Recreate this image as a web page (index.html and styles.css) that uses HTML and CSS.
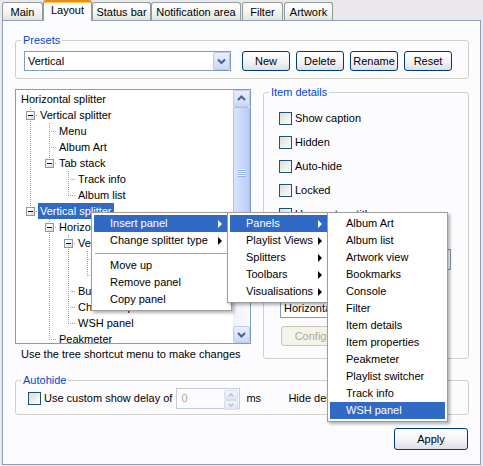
FILE: index.html
```html
<!DOCTYPE html>
<html>
<head>
<meta charset="utf-8">
<title>Layout</title>
<link rel="stylesheet" href="styles.css">
</head>
<body>
<div class="dlg">
  <div class="tabs">
    <div class="tab t-main">Main</div>
    <div class="tab sel t-layout">Layout</div>
    <div class="tab t-status">Status bar</div>
    <div class="tab t-notif">Notification area</div>
    <div class="tab t-filter">Filter</div>
    <div class="tab t-art">Artwork</div>
  </div>
  <div class="page">
    <div class="group presets">
      <span class="legend">Presets</span>
      <div class="combo preset-combo">
        <span class="combo-text">Vertical</span>
        <span class="dd"><svg width="15" height="16" viewBox="0 0 15 16"><polyline points="4,6.5 7.5,10 11,6.5" fill="none" stroke="#4D6185" stroke-width="2"/></svg></span>
      </div>
      <div class="btns">
        <div class="btn pbtn">New</div>
        <div class="btn pbtn">Delete</div>
        <div class="btn pbtn">Rename</div>
        <div class="btn pbtn">Reset</div>
      </div>
    </div>

    <div class="middle">
      <div class="treecol">
        <div class="tree">
          <div class="rows">
            <div class="row"><span class="lbl">Horizontal splitter</span></div>
            <div class="row"><span class="c tee"><i class="box"></i></span><span class="lbl">Vertical splitter</span></div>
            <div class="row"><span class="c v"></span><span class="c tee"></span><span class="lbl">Menu</span></div>
            <div class="row"><span class="c v"></span><span class="c tee"></span><span class="lbl">Album Art</span></div>
            <div class="row"><span class="c v"></span><span class="c ell"><i class="box"></i></span><span class="lbl">Tab stack</span></div>
            <div class="row"><span class="c v"></span><span class="c"></span><span class="c tee"></span><span class="lbl">Track info</span></div>
            <div class="row"><span class="c v"></span><span class="c"></span><span class="c ell"></span><span class="lbl">Album list</span></div>
            <div class="row"><span class="c ell"><i class="box"></i></span><span class="lbl sel">Vertical splitter</span></div>
            <div class="row"><span class="c"></span><span class="c tee"><i class="box"></i></span><span class="lbl">Horizontal splitter</span></div>
            <div class="row"><span class="c"></span><span class="c v"></span><span class="c tee"><i class="box"></i></span><span class="lbl">Vertical splitter</span></div>
            <div class="row"><span class="c"></span><span class="c v"></span><span class="c v"></span><span class="c tee"></span><span class="lbl">Playlist switcher</span></div>
            <div class="row"><span class="c"></span><span class="c v"></span><span class="c v"></span><span class="c ell"></span><span class="lbl">Filter</span></div>
            <div class="row"><span class="c"></span><span class="c v"></span><span class="c tee"></span><span class="lbl">Buttons</span></div>
            <div class="row"><span class="c"></span><span class="c v"></span><span class="c tee"></span><span class="lbl">Channel spectrum</span></div>
            <div class="row"><span class="c"></span><span class="c v"></span><span class="c ell"></span><span class="lbl">WSH panel</span></div>
            <div class="row"><span class="c"></span><span class="c ell"></span><span class="lbl">Peakmeter</span></div>
          </div>
          <div class="vscroll">
            <div class="sbtn"><svg width="15" height="15" viewBox="0 0 15 15"><polyline points="4,9 7.5,5.5 11,9" fill="none" stroke="#4D6185" stroke-width="2"/></svg></div>
            <div class="thumb"><span class="grip"></span></div>
            <div class="track"></div>
            <div class="sbtn"><svg width="15" height="15" viewBox="0 0 15 15"><polyline points="4,6 7.5,9.5 11,6" fill="none" stroke="#4D6185" stroke-width="2"/></svg></div>
          </div>
        </div>
        <div class="hint">Use the tree shortcut menu to make changes</div>
      </div>

      <div class="group details">
        <span class="legend">Item details</span>
        <div class="chkrow"><span class="chk"></span>Show caption</div>
        <div class="chkrow"><span class="chk"></span>Hidden</div>
        <div class="chkrow"><span class="chk"></span>Auto-hide</div>
        <div class="chkrow"><span class="chk"></span>Locked</div>
        <div class="chkrow"><span class="chk"></span>Use custom title</div>
        <div class="edit title-edit"></div>
        <div class="combo orient-combo"><span class="combo-text">Horizontal</span></div>
        <div class="btn dis cfg">Configure</div>
      </div>
    </div>

    <div class="group autohide">
      <span class="legend">Autohide</span>
      <span class="chk"></span>
      <span class="ah-label">Use custom show delay of</span>
      <div class="spin">
        <span class="spin-val">0</span>
        <span class="spin-btns">
          <span class="sp"><svg width="13" height="8" viewBox="0 0 13 8"><polyline points="4,5.5 6.5,3 9,5.5" fill="none" stroke="#B4BCC8" stroke-width="1.5"/></svg></span>
          <span class="sp"><svg width="13" height="8" viewBox="0 0 13 8"><polyline points="4,2.5 6.5,5 9,2.5" fill="none" stroke="#B4BCC8" stroke-width="1.5"/></svg></span>
        </span>
      </div>
      <span class="ms">ms</span>
      <span class="hide-label">Hide delay of</span>
      <div class="spin small"><span class="spin-val">0</span></div>
    </div>

    <div class="actions"><div class="btn apply">Apply</div></div>
  </div>
</div>

<div class="menu m1">
  <div class="mi hl sub">Insert panel</div>
  <div class="mi sub">Change splitter type</div>
  <div class="sep"></div>
  <div class="mi">Move up</div>
  <div class="mi">Remove panel</div>
  <div class="mi">Copy panel</div>
</div>
<div class="menu m2">
  <div class="mi hl sub">Panels</div>
  <div class="mi sub">Playlist Views</div>
  <div class="mi sub">Splitters</div>
  <div class="mi sub">Toolbars</div>
  <div class="mi sub">Visualisations</div>
</div>
<div class="menu m3">
  <div class="mi">Album Art</div>
  <div class="mi">Album list</div>
  <div class="mi">Artwork view</div>
  <div class="mi">Bookmarks</div>
  <div class="mi">Console</div>
  <div class="mi">Filter</div>
  <div class="mi">Item details</div>
  <div class="mi">Item properties</div>
  <div class="mi">Peakmeter</div>
  <div class="mi">Playlist switcher</div>
  <div class="mi">Track info</div>
  <div class="mi hl">WSH panel</div>
</div>
</body>
</html>
```

FILE: styles.css
```css
* { box-sizing: border-box; }
html, body { margin: 0; }
body {
  width: 483px;
  height: 466px;
  overflow: hidden;
  position: relative;
  background: #EBE8EB;
  font-family: "Liberation Sans", Arial, sans-serif;
  font-size: 11px;
  color: #000;
}

/* tabs */
.dlg { padding-left: 2px; }
.tabs {
  display: flex;
  align-items: flex-end;
  height: 20px;
  position: relative;
  z-index: 1;
}
.tab {
  height: 18px;
  padding-top: 1px;
  line-height: 17px;
  text-align: center;
  white-space: nowrap;
  border: 1px solid #919B9C;
  border-bottom: 0;
  border-radius: 3px 3px 0 0;
  background: linear-gradient(#FFFFFF, #F4F4F2 55%, #E4E3E0);
}
.tab.sel {
  height: 21px;
  margin-bottom: -1px;
  padding-top: 0;
  line-height: 17px;
  border-top: 2px solid #E68B2C;
  box-shadow: inset 0 1px 0 #FFC73C;
  background: #FCFCFE;
}
.t-main { width: 41px; }
.t-layout { width: 49px; }
.t-status { width: 59px; }
.t-notif { width: 90px; }
.t-filter { width: 41px; margin-left: 1px; }
.t-art { width: 49px; margin-left: 1px; }

/* page */
.page {
  width: 479px;
  height: 445px;
  border: 1px solid #8D9FBC;
  background: #FCFCFE;
  padding: 19px 11px 0 12px;
  overflow: hidden;
}

.group {
  position: relative;
  border: 1px solid #D0D0C8;
  border-radius: 3px;
}
.legend {
  position: absolute;
  top: -7px;
  left: 5px;
  padding: 0 2px;
  line-height: 13px;
  background: #FCFCFE;
  color: #0046D5;
  white-space: nowrap;
}

/* presets */
.presets {
  display: flex;
  align-items: flex-start;
  height: 39px;
  padding: 10px 0 0 8px;
}
.combo {
  display: flex;
  align-items: stretch;
  height: 20px;
  border: 1px solid #7F9DB9;
  background: #FFFFFF;
}
.combo-text {
  flex: 1;
  padding-left: 3px;
  line-height: 18px;
  white-space: nowrap;
  overflow: hidden;
}
.preset-combo { width: 207px; }
.dd {
  width: 17px;
  border: 1px solid #B9C8EC;
  border-radius: 2px;
  background: linear-gradient(#E9EFFC, #CBD8F6);
  display: flex;
  align-items: center;
  justify-content: center;
}
.dd svg { display: block; }
.btns {
  display: flex;
  gap: 6px;
  margin-left: 11px;
}
.btn {
  height: 20px;
  border: 1px solid #003C74;
  border-radius: 3px;
  background: linear-gradient(#FFFFFF, #F5F5F8 50%, #DCDFE9);
  text-align: center;
  line-height: 18px;
  white-space: nowrap;
}
.pbtn { width: 48px; }

/* middle */
.middle {
  display: flex;
  align-items: flex-start;
  margin-top: 10px;
}
.treecol { width: 236px; flex: none; }
.tree {
  height: 255px;
  border: 1px solid #7F9DB9;
  background: #FFFFFF;
  display: flex;
}
.rows {
  flex: 1;
  height: 253px;
  overflow: hidden;
  padding: 1px 0 0 2px;
}
.row {
  display: flex;
  height: 16px;
  white-space: nowrap;
}
.c {
  width: 19px;
  height: 16px;
  flex: none;
  position: relative;
}
.c.v::before, .c.tee::before, .c.ell::before {
  content: "";
  position: absolute;
  left: 12px;
  top: 0;
  width: 1px;
  height: 16px;
  background: repeating-linear-gradient(to bottom, #A0A0A0 0 1px, transparent 1px 2px);
}
.c.ell::before { height: 9px; }
.c.tee::after, .c.ell::after {
  content: "";
  position: absolute;
  left: 12px;
  top: 8px;
  width: 8px;
  height: 1px;
  background: repeating-linear-gradient(to right, #A0A0A0 0 1px, transparent 1px 2px);
}
.box {
  position: absolute;
  z-index: 2;
  left: 8px;
  top: 4px;
  width: 9px;
  height: 9px;
  border: 1px solid #8A99A8;
  background: linear-gradient(135deg, #FFFFFF 30%, #D4D4CC);
}
.box::after {
  content: "";
  position: absolute;
  left: 1px;
  top: 3px;
  width: 5px;
  height: 1px;
  background: #000;
}
.lbl {
  margin-left: 1px;
  padding: 0 2px;
  line-height: 16px;
  height: 16px;
}
.lbl.sel { background: #316AC5; color: #FFFFFF; }

.vscroll {
  width: 17px;
  flex: none;
  display: flex;
  flex-direction: column;
  background: linear-gradient(to right, #EEF1F8, #FAFBFE);
}
.sbtn {
  height: 17px;
  flex: none;
  border: 1px solid #BCCBEE;
  border-radius: 2px;
  background: linear-gradient(#E9EFFC, #CAD7F5);
  display: flex;
  align-items: center;
  justify-content: center;
}
.sbtn svg { display: block; }
.thumb {
  height: 131px;
  flex: none;
  border: 1px solid #A9BFEE;
  border-radius: 2px;
  background: linear-gradient(to right, #D9E4FD, #C7D7FB 60%, #B9CCF8);
  display: flex;
  align-items: center;
  justify-content: center;
}
.grip {
  width: 7px;
  height: 8px;
  background: repeating-linear-gradient(to bottom, #F2F6FE 0 1px, #8FAEF0 1px 2px);
}
.track { flex: 1; }

.hint {
  margin-top: 4px;
  padding-left: 6px;
  line-height: 13px;
  white-space: nowrap;
}

/* item details */
.details {
  flex: 1;
  margin-left: 12px;
  margin-top: 3px;
  height: 267px;
  padding: 13px 0 0 15px;
}
.chkrow {
  display: flex;
  align-items: center;
  height: 24px;
  white-space: nowrap;
}
.chk {
  width: 13px;
  height: 13px;
  flex: none;
  margin-right: 3px;
  border: 1px solid #1C5180;
  background: linear-gradient(135deg, #DCDCD7, #FFFFFF);
}
.edit {
  height: 21px;
  border: 1px solid #7F9DB9;
  background: #FFFFFF;
}
.title-edit { width: 171px; margin: 23px 0 0 1px; }
.orient-combo { width: 160px; margin: 28px 0 0 1px; }
.cfg { width: 75px; margin: 8px 0 0 2px; }
.btn.dis {
  border-color: #C9C7BA;
  background: #F5F4EA;
  color: #ACA899;
}

/* autohide */
.autohide {
  display: flex;
  align-items: center;
  margin-top: 19px;
  height: 35px;
  padding: 6px 0 5px 12px;
  white-space: nowrap;
}
.ah-label { flex: none; margin-right: 4px; }
.spin {
  width: 64px;
  height: 21px;
  flex: none;
  display: flex;
  border: 1px solid #C2CCD8;
  background: #FCFCFE;
}
.spin-val {
  flex: 1;
  padding-left: 4px;
  line-height: 19px;
  color: #ACA899;
}
.spin-btns {
  width: 15px;
  display: flex;
  flex-direction: column;
  padding: 1px 1px 1px 0;
}
.sp {
  flex: 1;
  border: 1px solid #D5DDEA;
  border-radius: 2px;
  background: linear-gradient(#F2F5FB, #DEE5F2);
  display: flex;
  align-items: center;
  justify-content: center;
}
.sp svg { display: block; }
.ms { width: 42px; flex: none; margin-left: 6px; }
.hide-label { margin-right: 6px; }

.actions {
  display: flex;
  justify-content: flex-end;
  margin-top: 13px;
}
.apply { width: 74px; height: 22px; line-height: 20px; margin-right: 1px; }

/* popup menus */
.menu {
  position: absolute;
  top: 212px;
  background: #FFFFFF;
  border: 1px solid #9D9D9D;
  padding: 2px;
  box-shadow: 2px 2px 3px rgba(0, 0, 0, 0.3);
}
.m1 { left: 91px; width: 141px; }
.m2 { left: 227px; width: 105px; }
.m3 { left: 327px; width: 121px; }
.mi {
  position: relative;
  height: 17px;
  line-height: 17px;
  padding-left: 16px;
  white-space: nowrap;
}
.mi.hl { background: #316AC5; color: #FFFFFF; }
.mi.sub::after {
  content: "";
  position: absolute;
  right: 7px;
  top: 5px;
  border-left: 4px solid #000;
  border-top: 4px solid transparent;
  border-bottom: 4px solid transparent;
}
.mi.hl.sub::after { border-left-color: #FFFFFF; }
.sep {
  height: 1px;
  margin: 4px 1px 3px;
  background: #ACA899;
}
```
